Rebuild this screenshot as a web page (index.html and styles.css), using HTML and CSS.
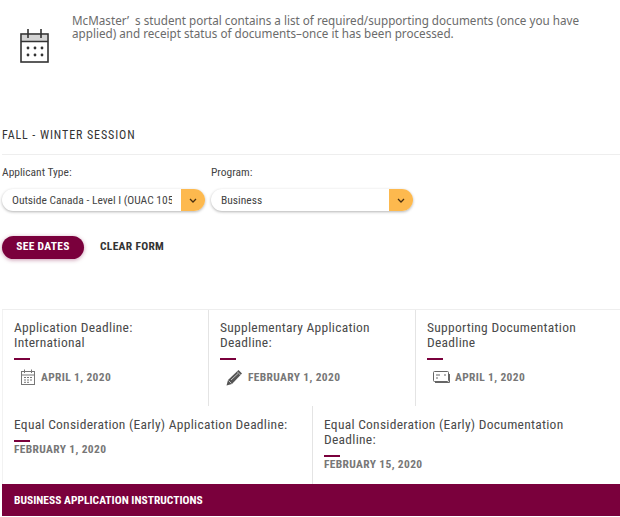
FILE: index.html
```html
<!DOCTYPE html>
<html lang="en">
<head>
<meta charset="UTF-8">
<meta name="viewport" content="width=device-width, initial-scale=1.0">
<title>Application Dates</title>
<link rel="stylesheet" href="styles.css">
</head>
<body class="page">

<div class="intro">
    <svg class="intro-icon" width="30" height="36" viewBox="0 0 30 36">
        <rect x="1" y="6" width="27" height="28" fill="#fff" stroke="#333" stroke-width="1.6"/>
        <rect x="2" y="7" width="25" height="6" fill="#d4d4d4"/>
        <path d="M1 13.5H28M8 1V10M21 1V10" stroke="#333" stroke-width="1.6" fill="none"/>
        <g fill="#333">
            <circle cx="8" cy="20" r="1.4"/><circle cx="15" cy="20" r="1.4"/><circle cx="22" cy="20" r="1.4"/>
            <circle cx="8" cy="27" r="1.4"/><circle cx="15" cy="27" r="1.4"/><circle cx="22" cy="27" r="1.4"/>
        </g>
    </svg>
    <p class="intro-text">McMaster’&nbsp;&nbsp;s student portal contains a list of required/supporting documents (once you have applied) and receipt status of documents–once it has been processed.</p>
</div>

<h2 class="session">FALL - WINTER SESSION</h2>

<form class="filters">
    <div class="field">
        <label class="field-label">Applicant Type:</label>
        <div class="select-box">
            <span class="select-value">Outside Canada - Level I (OUAC 105</span>
            <span class="select-arrow"><svg width="8" height="5" viewBox="0 0 8 5"><path d="M1 1L4 4L7 1" fill="none" stroke="#4a3010" stroke-width="1.3"/></svg></span>
        </div>
    </div>
    <div class="field field-narrow">
        <label class="field-label">Program:</label>
        <div class="select-box">
            <span class="select-value">Business</span>
            <span class="select-arrow"><svg width="8" height="5" viewBox="0 0 8 5"><path d="M1 1L4 4L7 1" fill="none" stroke="#4a3010" stroke-width="1.3"/></svg></span>
        </div>
    </div>
</form>

<div class="actions">
    <button class="btn-primary" type="button">SEE DATES</button>
    <button class="btn-link" type="button">CLEAR FORM</button>
</div>

<div class="dates">
    <div class="row row-three">
        <div class="date-card">
            <h3 class="date-title">Application Deadline: International</h3>
            <div class="rule"></div>
            <div class="date-value">
                <svg class="date-icon" width="16" height="16" viewBox="0 0 16 16">
                    <rect x="1.5" y="2.5" width="13" height="13" fill="none" stroke="#777"/>
                    <path d="M1.5 6H14.5M4.5 0.5V4M11.5 0.5V4" stroke="#777" fill="none"/>
                    <path d="M4 8.5H6M7 8.5H9M10 8.5H12M4 11H6M7 11H9M10 11H12M4 13.3H6M7 13.3H9" stroke="#777"/>
                </svg>
                APRIL 1, 2020
            </div>
        </div>
        <div class="date-card">
            <h3 class="date-title">Supplementary Application Deadline:</h3>
            <div class="rule"></div>
            <div class="date-value">
                <svg class="date-icon" width="17" height="17" viewBox="0 0 17 17">
                    <path d="M0.5 16.5L2 11L12.5 1L16 4.5L6 15Z" fill="#555"/>
                    <path d="M2.5 11.5L5.5 14.5M11 2.5L14.5 6M5 11L12 4.5" stroke="#ddd" stroke-width="0.8"/>
                </svg>
                FEBRUARY 1, 2020
            </div>
        </div>
        <div class="date-card">
            <h3 class="date-title">Supporting Documentation Deadline</h3>
            <div class="rule"></div>
            <div class="date-value">
                <svg class="date-icon" width="17" height="14" viewBox="0 0 17 14">
                    <rect x="0.5" y="1.5" width="15" height="10" rx="1" fill="none" stroke="#666"/>
                    <path d="M2 12.5H16.5V4" fill="none" stroke="#666"/>
                    <path d="M3 5H7M11 5H13M3 8H5" stroke="#666" stroke-width="1.2"/>
                </svg>
                APRIL 1, 2020
            </div>
        </div>
    </div>
    <div class="row row-two">
        <div class="date-card">
            <h3 class="date-title">Equal Consideration (Early) Application Deadline:</h3>
            <div class="rule rule-tight"></div>
            <div class="date-value date-value-plain">FEBRUARY 1, 2020</div>
        </div>
        <div class="date-card">
            <h3 class="date-title">Equal Consideration (Early) Documentation Deadline:</h3>
            <div class="rule rule-tight"></div>
            <div class="date-value date-value-plain">FEBRUARY 15, 2020</div>
        </div>
    </div>
</div>

<div class="banner">BUSINESS APPLICATION INSTRUCTIONS</div>

</body>
</html>
```

FILE: styles.css
```css
.page {
    margin: 0;
    padding: 0 0 0 2px;
    background-color: #fff;
    font-family: Roboto, Arial, sans-serif;
    font-stretch: 75%;
    color: #333;
    overflow: hidden;
}

.intro {
    display: flex;
    height: 107px;
    padding: 15px 0 0 18px;
    box-sizing: border-box;
}

.intro-icon {
    margin-top: 13px;
    flex-shrink: 0;
}

.intro-text {
    margin: 0 30px 0 22px;
    font-family: "Noto Sans", Arial, sans-serif;
    font-stretch: normal;
    font-size: 11.68px;
    line-height: 12.5px;
    color: #6b6b6b;
}

.session {
    margin: 0;
    height: 48px;
    box-sizing: border-box;
    padding-top: 21px;
    border-bottom: 1px solid #eee;
    font-size: 12px;
    line-height: 14px;
    font-weight: 400;
    letter-spacing: 0.9px;
    color: #333;
}

.filters {
    display: flex;
    gap: 6px;
    margin-top: 10px;
}

.field {
    width: 203px;
}

.field-narrow {
    width: 202px;
}

.field-label {
    display: block;
    font-size: 11.5px;
    line-height: 14px;
    color: #444;
    margin-bottom: 10px;
}

.select-box {
    display: flex;
    height: 22px;
    border-radius: 11px;
    background-color: #fff;
    box-shadow: 0 1px 3px rgba(0, 0, 0, 0.3);
    overflow: hidden;
}

.select-value {
    flex: 1;
    min-width: 0;
    margin: 0 9px 0 10px;
    overflow: hidden;
    white-space: nowrap;
    font-size: 11.5px;
    line-height: 22px;
    color: #444;
}

.select-arrow {
    display: flex;
    align-items: center;
    justify-content: center;
    flex: 0 0 24px;
    background-color: #fdb94e;
}

.actions {
    display: flex;
    align-items: center;
    gap: 16px;
    margin-top: 25px;
}

.btn-primary {
    width: 82px;
    height: 23px;
    padding: 0 0 3px;
    border: none;
    border-radius: 12px;
    background-color: #7a003c;
    box-shadow: 0 1px 4px rgba(122, 0, 60, 0.4);
    color: #fff;
    font-family: inherit;
    font-stretch: 75%;
    font-size: 11.5px;
    font-weight: 700;
    letter-spacing: 0.3px;
}

.btn-link {
    height: 23px;
    padding: 0 0 3px;
    border: none;
    background: none;
    color: #333;
    font-family: inherit;
    font-stretch: 75%;
    font-size: 11.5px;
    font-weight: 700;
    letter-spacing: 0.3px;
}

.dates {
    margin-top: 50px;
    border-top: 1px solid #eee;
}

.row {
    display: flex;
}

.row-three {
    height: 96px;
}

.row-two {
    height: 78px;
}

.row-three .date-card:nth-child(1) {
    width: 206px;
}

.row-three .date-card:nth-child(2) {
    width: 207px;
}

.row-three .date-card:nth-child(3) {
    flex: 1;
}

.row-two .date-card:first-child {
    width: 310px;
}

.row-two .date-card:last-child {
    flex: 1;
}

.date-card {
    box-sizing: border-box;
    padding: 10px 10px 0 11px;
    border-left: 1px solid #e4e4e4;
}

.row-two .date-card {
    padding-top: 11px;
}

.row-three .date-card:first-child,
.row-two .date-card:first-child {
    border-left-color: #f2f2f2;
}

.date-title {
    margin: 0;
    font-size: 13.5px;
    line-height: 15px;
    font-weight: 400;
    letter-spacing: 0.27px;
    color: #4a4a4a;
}

.rule {
    width: 16px;
    height: 2px;
    margin: 8px 0 7px;
    background-color: #7a003c;
}

.rule-tight {
    margin: 8px 0 0;
}

.date-value {
    display: flex;
    align-items: center;
    gap: 5px;
    padding-left: 6px;
    min-height: 20px;
    font-size: 11.5px;
    font-weight: 700;
    letter-spacing: 0.35px;
    color: #777;
}

.date-value-plain {
    padding-left: 0;
    min-height: 14px;
}

.banner {
    height: 32px;
    box-sizing: border-box;
    padding-left: 12px;
    background-color: #7a003c;
    color: #fff;
    font-size: 11.5px;
    line-height: 32px;
    font-weight: 700;
}
```
